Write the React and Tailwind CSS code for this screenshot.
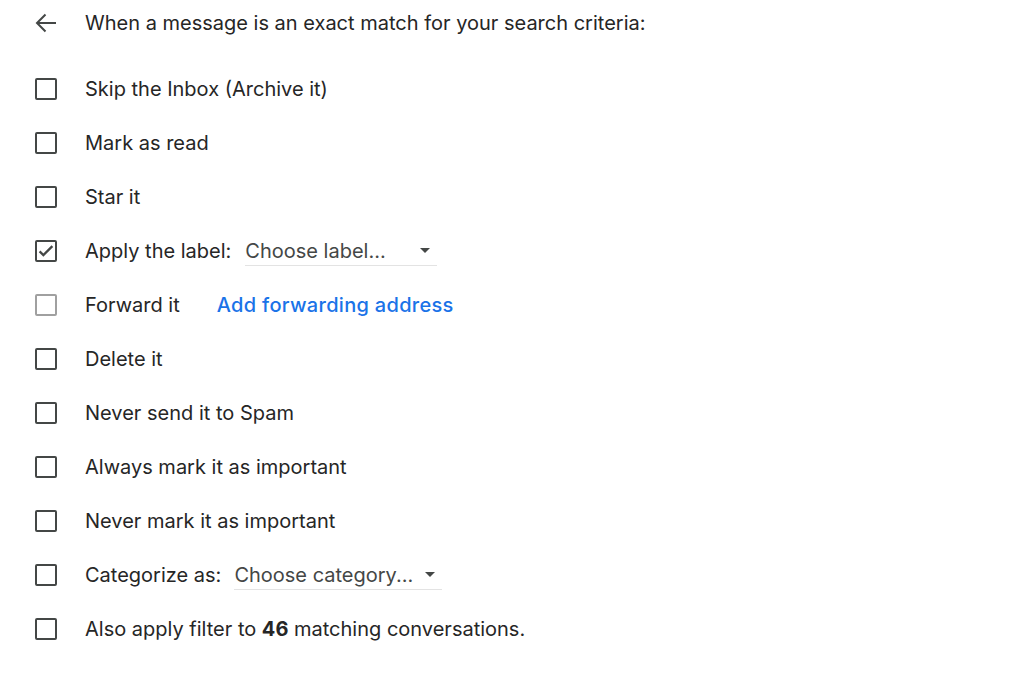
import React from "react";

function Box({ checked, disabled }) {
  return (
    <div
      className={
        "w-[22px] h-[22px] rounded-[2px] border-2 flex items-center justify-center shrink-0 " +
        (disabled ? "border-[#a0a0a0]" : "border-[#444746]")
      }
    >
      {checked && (
        <svg width="18" height="18" viewBox="0 0 24 24">
          <path d="M3.5 12.5l5 5L20.5 5.5" fill="none" stroke="#444746" strokeWidth="3" />
        </svg>
      )}
    </div>
  );
}

function Select({ text, width }) {
  return (
    <div className={"flex items-center justify-between h-[30px] border-b border-[#e3e3e3] " + width}>
      <span className="text-[#444746]">{text}</span>
      <svg width="10" height="5" viewBox="0 0 10 5" className="mr-[7px]">
        <path d="M0 0h10L5 5z" fill="#444746" />
      </svg>
    </div>
  );
}

function Row({ checked, disabled, children }) {
  return (
    <div className="flex items-center h-[54px]">
      <div className="w-[50px] pl-[35px] box-content flex items-center">
        <Box checked={checked} disabled={disabled} />
      </div>
      <div className="flex items-center">{children}</div>
    </div>
  );
}

export default function App() {
  return (
    <div
      className="w-[1024px] h-[685px] bg-white text-[#262626] text-[20px]"
      style={{ fontFamily: "Inter, Roboto, 'Noto Sans', sans-serif" }}
    >
      <div className="flex items-center h-[46px]">
        <div className="w-[50px] pl-[35px] box-content flex items-center">
          <svg width="22" height="22" viewBox="0 0 22 22">
            <path d="M21 11H2M10.5 2.5L2 11l8.5 8.5" fill="none" stroke="#444746" strokeWidth="2" />
          </svg>
        </div>
        <span>When a message is an exact match for your search criteria:</span>
      </div>
      <div className="mt-[16px]">
        <Row>Skip the Inbox (Archive it)</Row>
        <Row>Mark as read</Row>
        <Row>Star it</Row>
        <Row checked>
          <span className="mr-[14px]">Apply the label:</span>
          <Select text="Choose label..." width="w-[192px]" />
        </Row>
        <Row disabled>
          <span className="mr-[37px]">Forward it</span>
          <span className="text-[#1a73e8] font-medium tracking-[0.3px]">Add forwarding address</span>
        </Row>
        <Row>Delete it</Row>
        <Row>Never send it to Spam</Row>
        <Row>Always mark it as important</Row>
        <Row>Never mark it as important</Row>
        <Row>
          <span className="mr-[13px]">Categorize as:</span>
          <Select text="Choose category..." width="w-[208px]" />
        </Row>
        <Row>
          <span>
            Also apply filter to <b className="font-bold">46</b> matching conversations.
          </span>
        </Row>
      </div>
    </div>
  );
}
